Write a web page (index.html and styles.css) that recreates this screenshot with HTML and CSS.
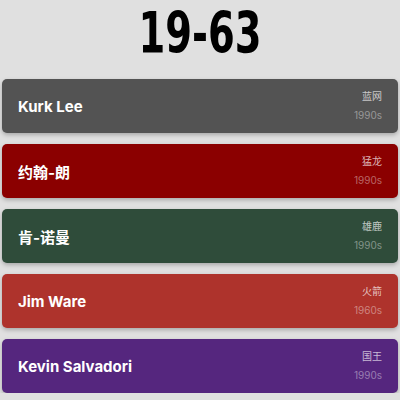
FILE: index.html
```html
<!DOCTYPE html>
<html lang="zh">
<head>
    <meta charset="UTF-8">
    <meta name="viewport" content="width=device-width, initial-scale=1.0">
    <title>19-63</title>
    <link rel="stylesheet" href="styles.css">
</head>
<body>
    <div class="page">
        <h1 class="title"><span>19-63</span></h1>
        <div class="list">
            <div class="card gray">
                <div class="name">Kurk Lee</div>
                <div class="meta">
                    <div class="team">蓝网</div>
                    <div class="era">1990s</div>
                </div>
            </div>
            <div class="card darkred">
                <div class="name">约翰-朗</div>
                <div class="meta">
                    <div class="team">猛龙</div>
                    <div class="era">1990s</div>
                </div>
            </div>
            <div class="card green">
                <div class="name">肯-诺曼</div>
                <div class="meta">
                    <div class="team">雄鹿</div>
                    <div class="era">1990s</div>
                </div>
            </div>
            <div class="card red">
                <div class="name">Jim Ware</div>
                <div class="meta">
                    <div class="team">火箭</div>
                    <div class="era">1960s</div>
                </div>
            </div>
            <div class="card purple">
                <div class="name">Kevin Salvadori</div>
                <div class="meta">
                    <div class="team">国王</div>
                    <div class="era">1990s</div>
                </div>
            </div>
        </div>
    </div>
</body>
</html>
```

FILE: styles.css
```css
body {
    margin: 0;
    padding: 0;
    background: #e0e0e0;
    font-family: Inter, "Noto Sans CJK SC", sans-serif;
}
.page {
    padding: 0 2px;
}
.title {
    margin: 0 0 12px;
    text-align: center;
    font-family: "DejaVu Sans", sans-serif;
    font-stretch: condensed;
    font-weight: 700;
    font-size: 57px;
    line-height: 67px;
    color: #000;
}
.title span {
    display: inline-block;
    transform: scaleX(0.75);
}
.list {
    display: flex;
    flex-direction: column;
    gap: 11px;
}
.card {
    height: 54px;
    border-radius: 5px;
    padding: 0 16px;
    display: flex;
    align-items: center;
    justify-content: space-between;
    box-shadow: 0 2px 4px rgba(0,0,0,0.25);
    color: #fff;
}
.name {
    font-size: 15px;
    font-weight: 700;
}
.meta {
    text-align: right;
    font-size: 10px;
    line-height: 19px;
}
.team {
    color: rgba(255,255,255,0.7);
}
.era {
    color: rgba(255,255,255,0.4);
}
.gray { background: #535353; }
.darkred { background: #8b0000; }
.green { background: #2f4c3a; }
.red { background: #ae332c; }
.purple { background: #55267e; }
```
